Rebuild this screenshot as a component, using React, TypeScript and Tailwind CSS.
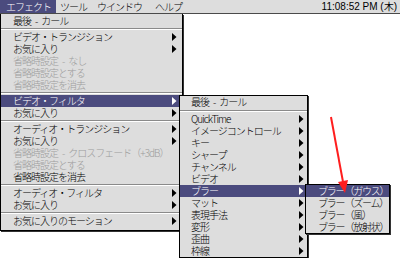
import React from "react";

type Item =
  | { sep: true }
  | { label: string; arrow?: boolean; disabled?: boolean; active?: boolean };

const jp = "font-['Noto_Sans_CJK_JP',sans-serif] font-light";

const mainItems: Item[] = [
  { label: "最後\u2002-\u2002カール" },
  { sep: true },
  { label: "ビデオ・トランジション", arrow: true },
  { label: "お気に入り", arrow: true },
  { label: "省略時設定\u2002-\u2002なし", disabled: true },
  { label: "省略時設定とする", disabled: true },
  { label: "省略時設定を消去", disabled: true },
  { sep: true },
  { label: "ビデオ・フィルタ", arrow: true, active: true },
  { label: "お気に入り", arrow: true },
  { sep: true },
  { label: "オーディオ・トランジション", arrow: true },
  { label: "お気に入り", arrow: true },
  { label: "省略時設定\u2002-\u2002クロスフェード（+3dB）", disabled: true },
  { label: "省略時設定とする", disabled: true },
  { label: "省略時設定を消去" },
  { sep: true },
  { label: "オーディオ・フィルタ", arrow: true },
  { label: "お気に入り", arrow: true },
  { sep: true },
  { label: "お気に入りのモーション", arrow: true },
];

const filterItems: Item[] = [
  { label: "最後\u2002-\u2002カール" },
  { sep: true },
  { label: "QuickTime", arrow: true },
  { label: "イメージコントロール", arrow: true },
  { label: "キー", arrow: true },
  { label: "シャープ", arrow: true },
  { label: "チャンネル", arrow: true },
  { label: "ビデオ", arrow: true },
  { label: "ブラー", arrow: true, active: true },
  { label: "マット", arrow: true },
  { label: "表現手法", arrow: true },
  { label: "変形", arrow: true },
  { label: "歪曲", arrow: true },
  { label: "枠線", arrow: true },
];

const blurItems: Item[] = [
  { label: "ブラー（ガウス）", active: true },
  { label: "ブラー（ズーム）" },
  { label: "ブラー（風）" },
  { label: "ブラー（放射状）" },
];

const Arrow = ({ white }: { white?: boolean }) => (
  <svg width="5" height="8" viewBox="0 0 5 8" className="shrink-0">
    <path d="M0 0 L4.5 4 L0 8 Z" fill={white ? "#ffffff" : "#000000"} />
  </svg>
);

const MenuRows = ({
  items,
  pl,
  pr,
  sepH,
  track,
}: {
  items: Item[];
  pl: string;
  pr: string;
  sepH: string;
  track: string;
}) => (
  <>
    {items.map((it, i) =>
      "sep" in it ? (
        <div key={i} className={`${sepH} flex flex-col justify-center`}>
          <div className="h-px bg-[#8a8a8a]" />
          <div className="h-px bg-white" />
        </div>
      ) : (
        <div
          key={i}
          className={`h-[12px] flex items-center justify-between ${pl} ${pr} leading-[12px] ${
            it.active ? "bg-[#4b4b7e] text-white" : it.disabled ? "text-[#9c9c9c]" : "text-black"
          }`}
        >
          <span className={`whitespace-nowrap ${jp} ${track}`}>{it.label}</span>
          {it.arrow && <Arrow white={it.active} />}
        </div>
      )
    )}
  </>
);

export default function App() {
  return (
    <div className="relative w-[400px] h-[258px] bg-white overflow-hidden text-[10px] text-black">
      <div className="flex h-[14px] items-stretch bg-[#dddddd] border-b border-[#4a4a4a] leading-[13px]">
        <span className={`bg-[#4b4b7e] text-white pl-[6px] pr-[5px] tracking-[-1px] ${jp}`}>エフェクト</span>
        <span className={`ml-[4px] tracking-[-1px] ${jp}`}>ツール</span>
        <span className={`ml-[10px] tracking-[-1px] ${jp}`}>ウインドウ</span>
        <span className={`ml-[13px] tracking-[-1px] ${jp}`}>ヘルプ</span>
        <span className="ml-auto pr-[3px] font-['Liberation_Sans',sans-serif] text-[10px]">
          11:08:52 PM (木)
        </span>
      </div>

      <div className="absolute left-0 top-[14px] w-[183px] bg-[#dddddd] border-x border-b border-black pt-px pb-[3px] shadow-[1px_1px_0_#333]">
        <MenuRows items={mainItems} pl="pl-[12px]" pr="pr-[5px]" sepH="h-[4px]" track="tracking-[-1px]" />
      </div>

      <div className="absolute left-[179px] top-[95px] w-[129px] bg-[#dddddd] border border-black shadow-[1px_1px_0_#333]">
        <MenuRows items={filterItems} pl="pl-[11px]" pr="pr-[3px]" sepH="h-[5px]" track="tracking-[-1px]" />
      </div>

      <div className="absolute left-[305px] top-[184px] w-[85px] bg-[#dddddd] border border-black shadow-[1px_1px_0_#333]">
        <MenuRows items={blurItems} pl="pl-[12px]" pr="pr-[3px]" sepH="h-[4px]" track="tracking-[-1.2px]" />
      </div>

      <svg className="absolute inset-0 pointer-events-none" width="400" height="258">
        <line x1="331" y1="117" x2="343" y2="182" stroke="#ff1e1e" strokeWidth="2" />
        <polygon points="345,193 348,180 338,182" fill="#ff1e1e" />
      </svg>
    </div>
  );
}
